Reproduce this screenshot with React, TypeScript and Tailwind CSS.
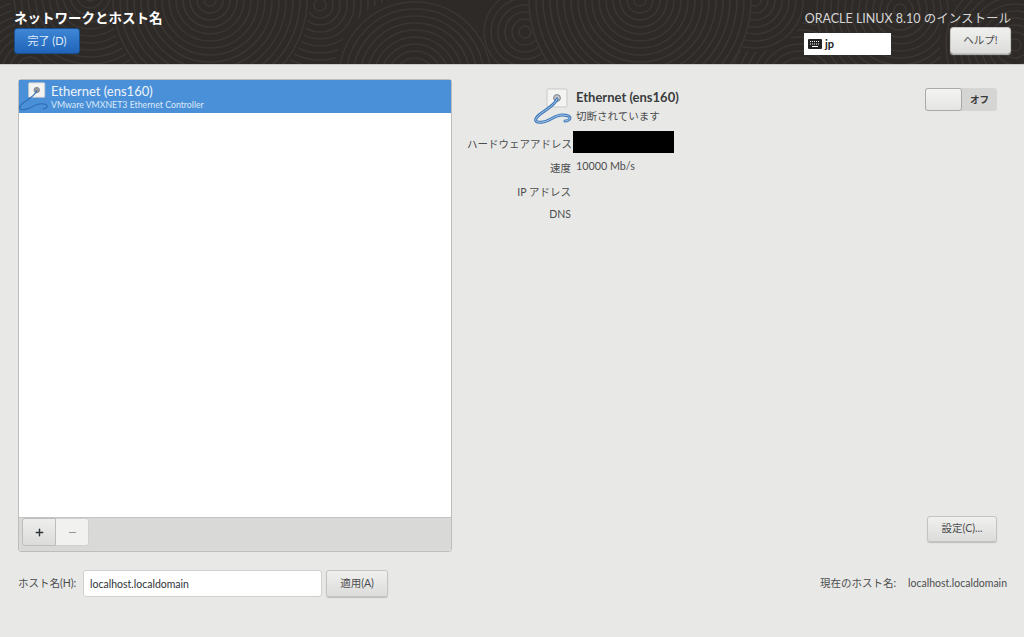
import { Plus, Minus } from "lucide-react";

const jp = "font-['Lato','Noto_Sans_CJK_JP',sans-serif]";

// concentric swirls, later ones cover earlier ones
const swirls = [
  [30, 70, 90],
  [90, -5, 80],
  [320, 5, 75],
  [210, 0, 100],
  [415, 78, 82],
  [525, 32, 42],
  [800, 85, 72],
  [755, 0, 52],
  [640, 0, 112],
  [900, 10, 85],
  [1015, 45, 75],
];

const cablePath = "M22 11C20 18 6 24 2 29C-1 33 1 35 8 34C15 33 20 27 27 27C31 27 35 28 35 30C35 32 32 33 30 33";

function HeaderTexture() {
  return (
    <svg className="absolute inset-0 h-full w-full" viewBox="0 0 1024 64" fill="none">
      {swirls.map(([cx, cy, max]) => {
        const rings: number[] = [];
        for (let r = 6; r <= max; r += 7) rings.push(r);
        return (
          <g key={`${cx}-${cy}`}>
            <circle cx={cx} cy={cy} r={max} fill="#2e2a28" />
            {rings.map((r) => (
              <circle key={r} cx={cx} cy={cy} r={r} stroke="#3a3633" strokeWidth="1.6" />
            ))}
          </g>
        );
      })}
    </svg>
  );
}

function CableIcon({ className, light }: { className: string; light?: boolean }) {
  return (
    <svg className={`overflow-visible ${className}`} viewBox="0 0 36 36" fill="none">
      <rect x="12" y="1" width="20" height="18" rx="1" fill="#f4f4f3" stroke="#c9c9c7" />
      <circle cx="22" cy="10" r="3.4" fill={light ? "#9a9a9a" : "#c4c4c4"} stroke="#77828e" />
      <path d={cablePath} stroke={light ? "#2f6db4" : "#3f78b8"} strokeWidth={light ? 1.5 : 3} strokeLinecap="round" />
      {!light && <path d={cablePath} stroke="#a9cbec" strokeWidth="1" strokeLinecap="round" />}
    </svg>
  );
}

function GrayButton({ className, children }: { className: string; children: React.ReactNode }) {
  return (
    <button
      className={`flex items-center justify-center rounded-[3px] border border-[#c4c4c2] bg-gradient-to-b from-[#f0f0ef] to-[#dcdcda] text-[10.5px] text-[#4c4e4e] shadow-[0_1px_1px_#bbbbb9] ${className}`}
    >
      {children}
    </button>
  );
}

export default function App() {
  return (
    <div className={`flex h-[637px] w-[1024px] flex-col overflow-hidden bg-[#e8e8e7] ${jp}`}>
      <header className="relative flex h-[65px] shrink-0 justify-between overflow-hidden border-b border-[#c9c9c7] bg-[#2e2a28] pr-[13px] pl-[14px] pt-[10px]">
        <HeaderTexture />
        <div className="relative flex flex-col items-start">
          <h1 className="text-[13.5px] leading-[16px] font-bold text-white">ネットワークとホスト名</h1>
          <button className="mt-[2px] h-[26px] w-[66px] rounded-[3px] border border-[#174f8f] bg-gradient-to-b from-[#3f86d6] to-[#1f64b8] text-[11px] text-[#dfeaf7]">
            完了 (D)
          </button>
        </div>
        <div className="relative flex flex-col items-end">
          <p className="text-[12.5px] leading-[17px] text-[#d6d6d6]">ORACLE LINUX 8.10 のインストール</p>
          <div className="flex items-start">
            <div className="mt-[6px] mr-[59px] flex h-[22px] w-[87px] items-center gap-[3px] bg-white pl-[4px]">
              <svg className="h-[10px] w-[14px]" viewBox="0 0 14 10">
                <rect width="14" height="10" rx="1" fill="#222" />
                <path d="M2 2.5h10M2 5h10" stroke="#fff" strokeDasharray="1 1" />
                <path d="M4 7.5h6" stroke="#fff" />
              </svg>
              <span className="text-[11px] font-bold text-[#222]">jp</span>
            </div>
            <GrayButton className="h-[27px] w-[61px]">ヘルプ!</GrayButton>
          </div>
        </div>
      </header>

      <main className="flex min-h-0 flex-1 flex-col px-[18px] pt-[14px]">
        <div className="flex h-[473px] shrink-0">
          <section className="flex w-[434px] shrink-0 flex-col rounded-[3px] border border-[#bdbdbb] bg-white">
            <div className="flex h-[33px] items-center bg-[#4a90d9] text-white">
              <CableIcon className="h-[29px] w-[29px]" light />
              <div className="ml-[3px]">
                <p className="text-[13px] leading-[15px] text-[#eef4fb]">Ethernet (ens160)</p>
                <p className="text-[8.75px] leading-[11px] text-[#dce9f7]">VMware VMXNET3 Ethernet Controller</p>
              </div>
            </div>
            <div className="flex-1" />
            <div className="flex h-[34px] items-start rounded-b-[3px] border-t border-[#c4c4c2] bg-[#d9d9d7] pl-[3px]">
              <button className="flex h-[28px] w-[34px] items-center justify-center rounded-l-[3px] border border-[#bdbdbb] bg-gradient-to-b from-[#eeeeed] to-[#dcdcda] text-[#2e3436]">
                <Plus className="h-[11px] w-[11px]" strokeWidth={3} />
              </button>
              <button className="flex h-[28px] w-[33px] items-center justify-center rounded-r-[3px] border border-l-0 border-[#d0d0ce] bg-[#f1f1f0] text-[#8d9091]">
                <Minus className="h-[11px] w-[11px]" strokeWidth={2} />
              </button>
            </div>
          </section>

          <section className="flex flex-1 flex-col items-end pt-[9px] pr-[9px]">
            <div className="flex w-full items-start justify-between">
              <div className="grid grid-cols-[104px_auto] gap-x-[5px] pl-[15px] text-[10.5px] text-[#4c4e4e]">
                <div className="col-start-1 flex h-[36px] justify-end">
                  <CableIcon className="h-[36px] w-[36px]" />
                </div>
                <div>
                  <p className="text-[13px] leading-[18px] font-bold text-[#3a3c3c]">Ethernet (ens160)</p>
                  <p className="mt-[1px] leading-[18px]">切断されています</p>
                </div>
                <p className="mt-[8px] text-right leading-[22px] whitespace-nowrap">ハードウェアアドレス</p>
                <div className="mt-[6px] ml-[-3px] h-[22px] w-[101px] bg-black" />
                <p className="mt-[1px] text-right leading-[24px]">速度</p>
                <p className="leading-[22px] text-[10.75px]">10000 Mb/s</p>
                <p className="text-right leading-[24px]">IP アドレス</p>
                <p />
                <p className="text-right leading-[20px]">DNS</p>
              </div>
              <div className="flex h-[23px] w-[72px] rounded-[3px] bg-[#d5d5d3]">
                <span className="h-[23px] w-[37px] rounded-[3px] border border-[#a9a9a7] bg-gradient-to-b from-[#f4f4f3] to-[#e4e4e2]" />
                <span className="flex-1 text-center text-[9.5px] leading-[23px] font-bold text-[#3a3c3c]">オフ</span>
              </div>
            </div>
            <GrayButton className="mt-auto mb-[10px] h-[26px] w-[70px]">設定(C)...</GrayButton>
          </section>
        </div>

        <div className="mt-[18px] flex items-center text-[10.5px] text-[#4c4e4e]">
          <label className="w-[61px] whitespace-nowrap">ホスト名(H):</label>
          <input
            readOnly
            value="localhost.localdomain"
            className="ml-[4px] h-[27px] w-[239px] rounded-[3px] border border-[#d0d0ce] bg-white pl-[6px] text-[10.5px] text-[#2e3436] outline-none"
          />
          <GrayButton className="ml-[4px] h-[27px] w-[62px]">適用(A)</GrayButton>
          <span className="mt-[1px] ml-auto">現在のホスト名:</span>
          <span className="mr-[-1px] ml-[12px] text-[10.5px]">localhost.localdomain</span>
        </div>
      </main>
    </div>
  );
}
